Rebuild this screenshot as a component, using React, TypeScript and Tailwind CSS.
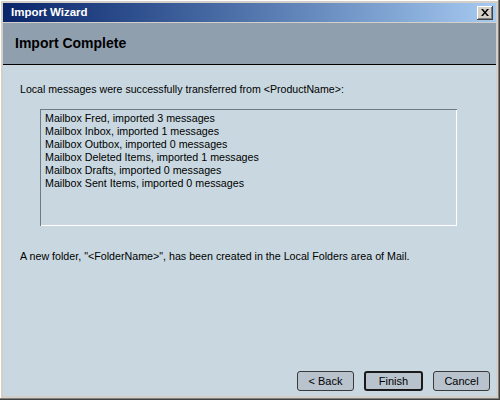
const font = { fontFamily: '"Liberation Sans", Arial, sans-serif' };

const items = [
  "Mailbox Fred, imported 3 messages",
  "Mailbox Inbox, imported 1 messages",
  "Mailbox Outbox, imported 0 messages",
  "Mailbox Deleted Items, imported 1 messages",
  "Mailbox Drafts, imported 0 messages",
  "Mailbox Sent Items, imported 0 messages",
];

function CloseButton() {
  return (
    <div className="w-[16px] h-[14px] bg-[#d4d0c8] flex items-center justify-center shadow-[inset_-1px_-1px_#404040,inset_1px_1px_#ffffff,inset_-2px_-2px_#808080]">
      <svg width="8" height="7" viewBox="0 0 8 7">
        <path d="M0 0h2l2 2.5L6 0h2L5 3.5 8 7H6L4 4.5 2 7H0l3-3.5z" fill="#000" />
      </svg>
    </div>
  );
}

function Button({ label, primary }: { label: string; primary?: boolean }) {
  return (
    <button
      className={
        "h-[20px] rounded-[3px] bg-[#b8c3cd] text-[11px] text-black flex items-center justify-center " +
        (primary ? "w-[59px] border-2 border-[#1a1a1a]" : "w-[57px] border border-[#3a3a3a]")
      }
      style={font}
    >
      {label}
    </button>
  );
}

export default function App() {
  return (
    <div
      className="w-[500px] h-[400px] bg-[#d4d0c8] pl-[3px] pt-[3px] pr-[4px] pb-[4px] flex flex-col shadow-[inset_-1px_-1px_#404040,inset_-2px_-2px_#808080,inset_1px_1px_#ffffff]"
      style={font}
    >
      {/* title bar */}
      <div className="h-[19px] flex items-center justify-between pl-[8px] pr-[3px] bg-gradient-to-r from-[#0a246a] to-[#a6caf0]">
        <span className="text-white font-bold text-[11.5px]">Import Wizard</span>
        <CloseButton />
      </div>
      <div className="h-px bg-[#d4d0c8]" />

      {/* header */}
      <div className="h-[42px] bg-[#909fae] border-b border-black flex items-center pl-[12px]">
        <span className="font-bold text-[14px] text-black">Import Complete</span>
      </div>

      {/* body */}
      <div className="flex-1 bg-[#c9d8e0] flex flex-col pt-[18px] px-[17px] pb-[5px]">
        <p className="text-[10.6px] leading-[13px] text-black">
          Local messages were successfully transferred from &lt;ProductName&gt;:
        </p>
        <div className="ml-[20px] mt-[13px] w-[417px] h-[117px] border-t border-l border-[#6e7a84] shadow-[inset_-1px_-1px_#ffffff] pl-[4px] pt-[2px]">
          {items.map((t) => (
            <div key={t} className="text-[10.7px] leading-[13px] text-black">
              {t}
            </div>
          ))}
        </div>
        <p className="mt-[24px] text-[10.7px] leading-[13px] text-black">
          A new folder, "&lt;FolderName&gt;", has been created in the Local Folders area of Mail.
        </p>
        <div className="mt-auto flex justify-end gap-[10px] -mr-[11px]">
          <Button label="< Back" />
          <Button label="Finish" primary />
          <Button label="Cancel" />
        </div>
      </div>
    </div>
  );
}
